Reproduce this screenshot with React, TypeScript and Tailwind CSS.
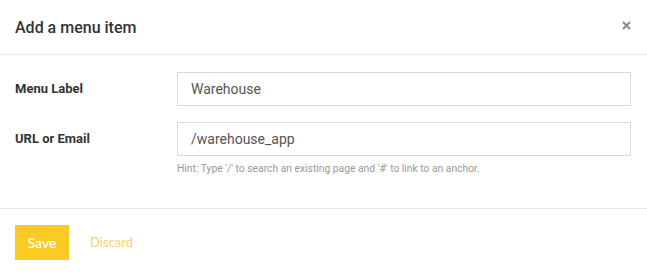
export default function App() {
  return (
    <div className="w-[647px] h-[276px] bg-white text-[#333]" style={{ fontFamily: 'Roboto, "Liberation Sans", sans-serif' }}>
      {/* Header */}
      <div className="h-[55px] border-b border-[#e8e8e8] flex items-center justify-between pl-[15px] pr-[16px]">
        <h2 className="text-[16px] font-medium text-[#333] pt-[2px]">Add a menu item</h2>
        <button className="text-[#888] w-[10px] h-[10px] flex items-center justify-center mt-[-4px]">
          <svg width="9" height="9" viewBox="0 0 9 9">
            <path d="M1 1L8 8M8 1L1 8" stroke="#8a8a8a" strokeWidth="2" strokeLinecap="butt" />
          </svg>
        </button>
      </div>

      {/* Body */}
      <div className="h-[154px] border-b border-[#e8e8e8] pt-[17px] pl-[15px] pr-[16px]">
        <div className="flex items-center">
          <label className="w-[162px] text-[13px] font-bold text-[#333]">Menu Label</label>
          <input
            readOnly
            value="Warehouse"
            className="flex-1 h-[34px] border border-[#d9d9d9] px-[13px] text-[14px] text-[#555] outline-none"
          />
        </div>
        <div className="flex items-center mt-[16px]">
          <label className="w-[162px] text-[13px] font-bold text-[#333]">URL or Email</label>
          <input
            readOnly
            value="/warehouse_app"
            className="flex-1 h-[34px] border border-[#d9d9d9] px-[13px] text-[14px] text-[#555] outline-none"
          />
        </div>
        <p className="ml-[162px] mt-[5px] text-[10.3px] text-[#999]">
          Hint: Type '/' to search an existing page and '#' to link to an anchor.
        </p>
      </div>

      {/* Footer */}
      <div className="flex items-center pl-[15px] pt-[16px] gap-[21px]">
        <button
          className="w-[54px] h-[35px] bg-[#fccb23] text-white text-[14px] font-medium"
          style={{ fontFamily: 'Lato, Roboto, sans-serif' }}
        >
          Save
        </button>
        <button
          className="text-[#fbd57a] text-[13px] font-medium"
          style={{ fontFamily: 'Lato, Roboto, sans-serif' }}
        >
          Discard
        </button>
      </div>
    </div>
  )
}
